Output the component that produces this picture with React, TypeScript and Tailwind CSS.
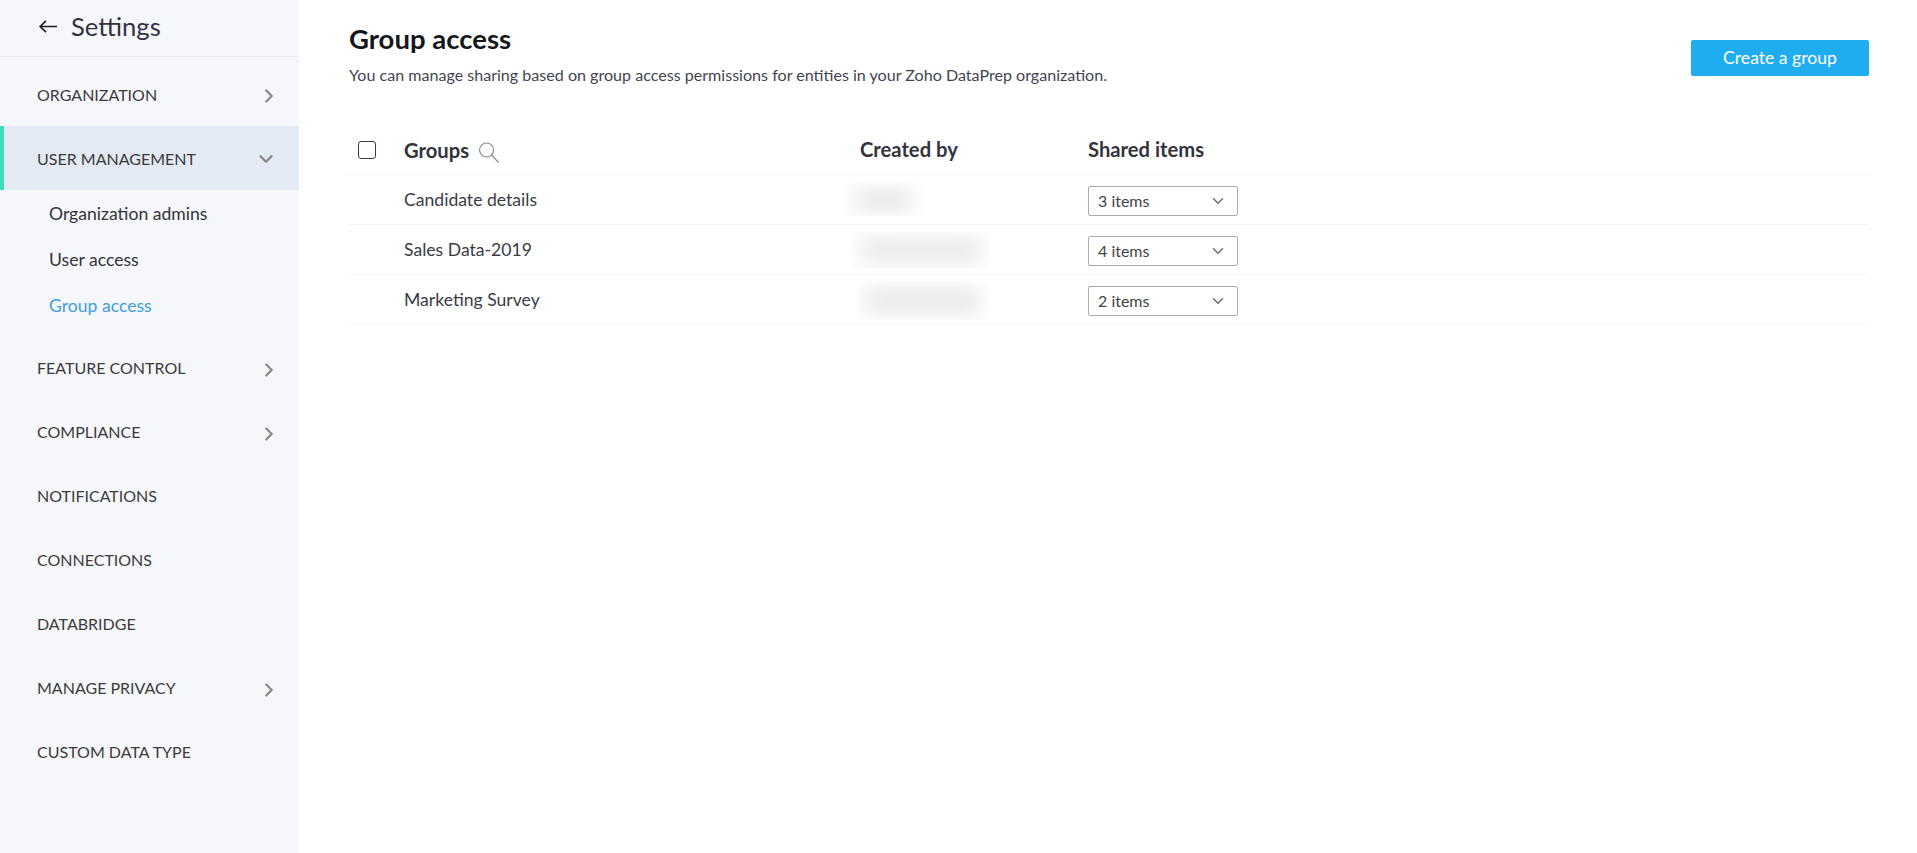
import { ChevronDown, ChevronRight } from "lucide-react";

const lato = "font-['Lato','Liberation_Sans',sans-serif]";

function NavItem({
  label,
  open,
  active,
  nudge,
}: {
  label: string;
  open?: boolean;
  active?: boolean;
  nudge?: boolean;
}) {
  return (
    <div
      className={`flex h-16 items-center justify-between border-l-4 pl-[33px] text-[16px] uppercase text-[#3d3a3a] ${
        active ? "border-[#41dbb9] bg-[#e3eaf3]" : "border-transparent"
      } ${open ? "pr-[22px]" : "pr-[19px]"}`}
    >
      <span className={nudge ? "mt-[2px]" : ""}>{label}</span>
      {open === undefined ? null : open ? (
        <ChevronDown size={22} strokeWidth={2.6} className="mt-[1px] text-[#8a8a8a]" />
      ) : (
        <ChevronRight size={22} strokeWidth={2.6} className="mt-[3px] text-[#8a8a8a]" />
      )}
    </div>
  );
}

function Row({
  name,
  items,
  boxClass,
  barClass,
}: {
  name: string;
  items: string;
  boxClass: string;
  barClass: string;
}) {
  return (
    <div className="flex h-[50px] items-center border-b border-dotted border-[#ececec] text-[#3b3b45]">
      <div className="w-[55px]" />
      <div className="mt-[2px] w-[456px] text-[17.6px]">{name}</div>
      <div className="w-[228px]">
        {/* blurred-out owner name */}
        <div className={`flex items-center justify-center overflow-hidden ${boxClass}`}>
          <div className={`shrink-0 rounded-full bg-[#e8e8e8] blur-[10px] ${barClass}`} />
        </div>
      </div>
      <div className="mt-[3px] flex h-[30px] w-[150px] items-center justify-between rounded-[2px] border border-[#ababab] pl-[9px] pr-[10px] text-[16px] text-[#444]">
        <span>{items}</span>
        <ChevronDown size={18} strokeWidth={2} className="text-[#6f6f6f]" />
      </div>
    </div>
  );
}

export default function App() {
  return (
    <div className={`flex h-[853px] w-full overflow-hidden bg-white ${lato}`}>
      <aside className="w-[299px] shrink-0 bg-[#f6f7fb]">
        <div className="flex h-[57px] items-center border-b border-[#ececec] pb-[3px] pl-[39px]">
          <svg width="18" height="13" viewBox="0 0 18 13" fill="none" stroke="#1d1d1f" strokeWidth="1.7">
            <path d="M1 6.5H18M7 .8 1.2 6.5 7 12.2" />
          </svg>
          <span className="ml-[14px] text-[25.6px] text-[#33333f]">Settings</span>
        </div>
        <div className="pt-[5px]">
          <NavItem label="Organization" open={false} nudge />
          <NavItem label="User management" open active nudge />
          <div className="pb-[7px] pl-[49px] pt-[1px] text-[17.6px] text-[#33333a]">
            <div className="flex h-[46px] items-center">Organization admins</div>
            <div className="flex h-[46px] items-center">User access</div>
            <div className="flex h-[46px] items-center text-[#3f9ee0]">Group access</div>
          </div>
          <NavItem label="Feature control" open={false} />
          <NavItem label="Compliance" open={false} />
          <NavItem label="Notifications" />
          <NavItem label="Connections" />
          <NavItem label="Databridge" />
          <NavItem label="Manage privacy" open={false} />
          <NavItem label="Custom data type" />
        </div>
      </aside>

      <main className="flex-1 pl-[50px] pr-[48px]">
        <div className="flex items-start justify-between pt-[21px]">
          <div>
            <h1 className="text-[27.5px] font-bold leading-[36px] text-[#16161c]">Group access</h1>
            <p className="mt-[6px] text-[16.08px] text-[#444450]">
              You can manage sharing based on group access permissions for entities in your Zoho DataPrep organization.
            </p>
          </div>
          <button className="mt-[19px] h-9 w-[178px] rounded-[2px] bg-[#1fadef] text-[17.6px] text-white">
            Create a group
          </button>
        </div>

        <div className="mt-[38px]">
          <div className="flex h-[50px] items-center border-b border-dotted border-[#ececec] text-[20.2px] font-bold text-[#33333a]">
            <div className="w-[55px] pl-[9px]">
              <div className="h-[18px] w-[18px] rounded-[3px] border border-[#3a3a55] bg-white" />
            </div>
            <div className="flex w-[456px] items-center gap-[10px] pt-[1px]">
              <span>Groups</span>
              <svg
                width="20"
                height="21"
                viewBox="0 0 20 21"
                fill="none"
                stroke="#8c8c8c"
                strokeWidth="1.2"
                className="mt-[5px]"
              >
                <circle cx="7.6" cy="8" r="7" />
                <path d="M12.6 13 19.6 20.5" />
              </svg>
            </div>
            <div className="w-[228px]">Created by</div>
            <div>Shared items</div>
          </div>
          <Row
            name="Candidate details"
            items="3 items"
            boxClass="-ml-[16px] h-[33px] w-[91px]"
            barClass="-ml-[14px] h-[24px] w-[62px]"
          />
          <Row
            name="Sales Data-2019"
            items="4 items"
            boxClass="-ml-[8px] h-[36px] w-[138px]"
            barClass="h-[24px] w-[126px]"
          />
          <Row
            name="Marketing Survey"
            items="2 items"
            boxClass="-ml-[2px] mt-[3px] h-[38px] w-[130px]"
            barClass="h-[26px] w-[120px]"
          />
        </div>
      </main>
    </div>
  );
}
